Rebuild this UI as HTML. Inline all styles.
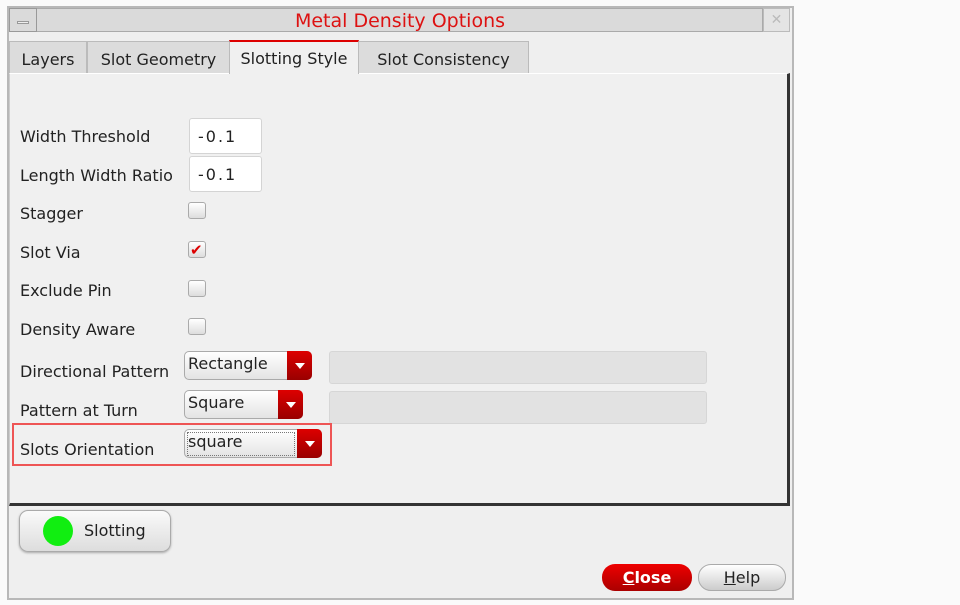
<!DOCTYPE html>
<html><head><meta charset="utf-8"><style>
body{margin:0;width:960px;height:605px;background:#fafafa;font-family:"DejaVu Sans","Liberation Sans",sans-serif;font-size:16px;color:#222;position:relative;overflow:hidden}
div,span{position:absolute;box-sizing:border-box}
.win{left:7px;top:6px;width:787px;height:594px;background:#efefef;border:2px solid #b8b8b8}
.lbl{left:20px;white-space:nowrap;line-height:18px}
.inp{left:189px;width:73px;height:36px;background:#fff;border:1px solid #d4d4d4;border-radius:3px;padding:8px 0 0 8px;letter-spacing:2px}
.cb{left:188px;width:18px;height:17px;border:1px solid #aaa;border-radius:3px;background:linear-gradient(#fff,#ddd)}
.dd{left:184px;height:29px;border:1px solid #aaa;border-radius:5px;background:linear-gradient(#fff,#e4e4e4);padding:2px 0 0 3px;line-height:20px}
.arr{right:-1px;top:-1px;width:25px;height:29px;background:linear-gradient(#d00,#900);border-radius:0 5px 5px 0}
.arr:after{content:"";position:absolute;left:8px;top:12px;border:5px solid transparent;border-top:6px solid #fff;border-bottom:0}
.gb{left:329px;width:378px;height:33px;background:#e2e2e2;border:1px solid #d6d6d6;border-radius:3px}
.tab{top:41px;height:32px;background:#dcdcdc;border:1px solid #bbb;border-bottom:none;padding:8px 0 0 0;text-align:center}
</style></head><body>
<div class="win"></div>
<div style="left:9px;top:8px;width:754px;height:24px;background:#dadada;border:1px solid #aaa"></div>
<div style="left:9px;top:8px;width:28px;height:24px;background:#dadada;border:1px solid #999"><span style="left:7px;top:12px;width:12px;height:3px;border:1px solid #999;background:#eee"></span></div>
<div style="left:763px;top:8px;width:27px;height:24px;background:#e4e4e4;border:1px solid #bbb;color:#bbb;font-size:14px;text-align:center;line-height:22px">✕</div>
<div style="left:37px;top:9px;width:726px;text-align:center;color:#d11;font-size:19px;line-height:24px">Metal Density Options</div>
<div class="tab" style="left:9px;width:78px">Layers</div>
<div class="tab" style="left:87px;width:143px">Slot Geometry</div>
<div class="tab" style="left:358px;width:171px">Slot Consistency</div>
<div class="tab" style="left:229px;width:130px;top:40px;height:34px;background:#f0f0f0;border-top:2px solid #d00;padding-top:7px;z-index:2">Slotting Style</div>
<div style="left:9px;top:73px;width:781px;height:433px;border-left:1px solid #ccc;border-top:1px solid #fff;border-right:3px solid #333;border-bottom:3px solid #333;background:#f0f0f0"></div>
<div class="lbl" style="top:128px">Width Threshold</div>
<div class="inp" style="top:118px">-0.1</div>
<div class="lbl" style="top:167px">Length Width Ratio</div>
<div class="inp" style="top:156px">-0.1</div>
<div class="lbl" style="top:205px">Stagger</div><div class="cb" style="top:202px"></div>
<div class="lbl" style="top:244px">Slot Via</div><div class="cb" style="top:241px"><span style="left:1px;top:-1px;color:#d00;font-size:15px;font-weight:bold">✔</span></div>
<div class="lbl" style="top:282px">Exclude Pin</div><div class="cb" style="top:280px"></div>
<div class="lbl" style="top:321px">Density Aware</div><div class="cb" style="top:318px"></div>
<div class="lbl" style="top:363px">Directional Pattern</div>
<div class="dd" style="top:351px;width:128px">Rectangle<span class="arr"></span></div>
<div class="gb" style="top:351px"></div>
<div class="lbl" style="top:402px">Pattern at Turn</div>
<div class="dd" style="top:390px;width:119px">Square<span class="arr"></span></div>
<div class="gb" style="top:391px"></div>
<div style="left:12px;top:423px;width:320px;height:43px;border:2px solid #ee5555"></div>
<div class="lbl" style="top:441px">Slots Orientation</div>
<div class="dd" style="top:429px;width:138px"><span style="left:2px;top:2px;width:108px;height:24px;border:1px dotted #777"></span>square<span class="arr"></span></div>
<div style="left:19px;top:510px;width:152px;height:42px;border:1px solid #aaa;border-radius:9px;background:linear-gradient(#fafafa,#ddd);box-shadow:0 1px 2px #aaa"><span style="left:23px;top:5px;width:30px;height:30px;border-radius:50%;background:#1e1"></span><span style="left:64px;top:10px">Slotting</span></div>
<div style="left:602px;top:564px;width:90px;height:27px;border-radius:13px;background:linear-gradient(#e00,#a00);color:#fff;font-weight:bold;text-align:center;line-height:27px;font-size:16px"><u>C</u>lose</div>
<div style="left:698px;top:564px;width:88px;height:27px;border-radius:13px;border:1px solid #aaa;background:linear-gradient(#fff,#ccc);text-align:center;line-height:25px"><u>H</u>elp</div>
</body></html>
